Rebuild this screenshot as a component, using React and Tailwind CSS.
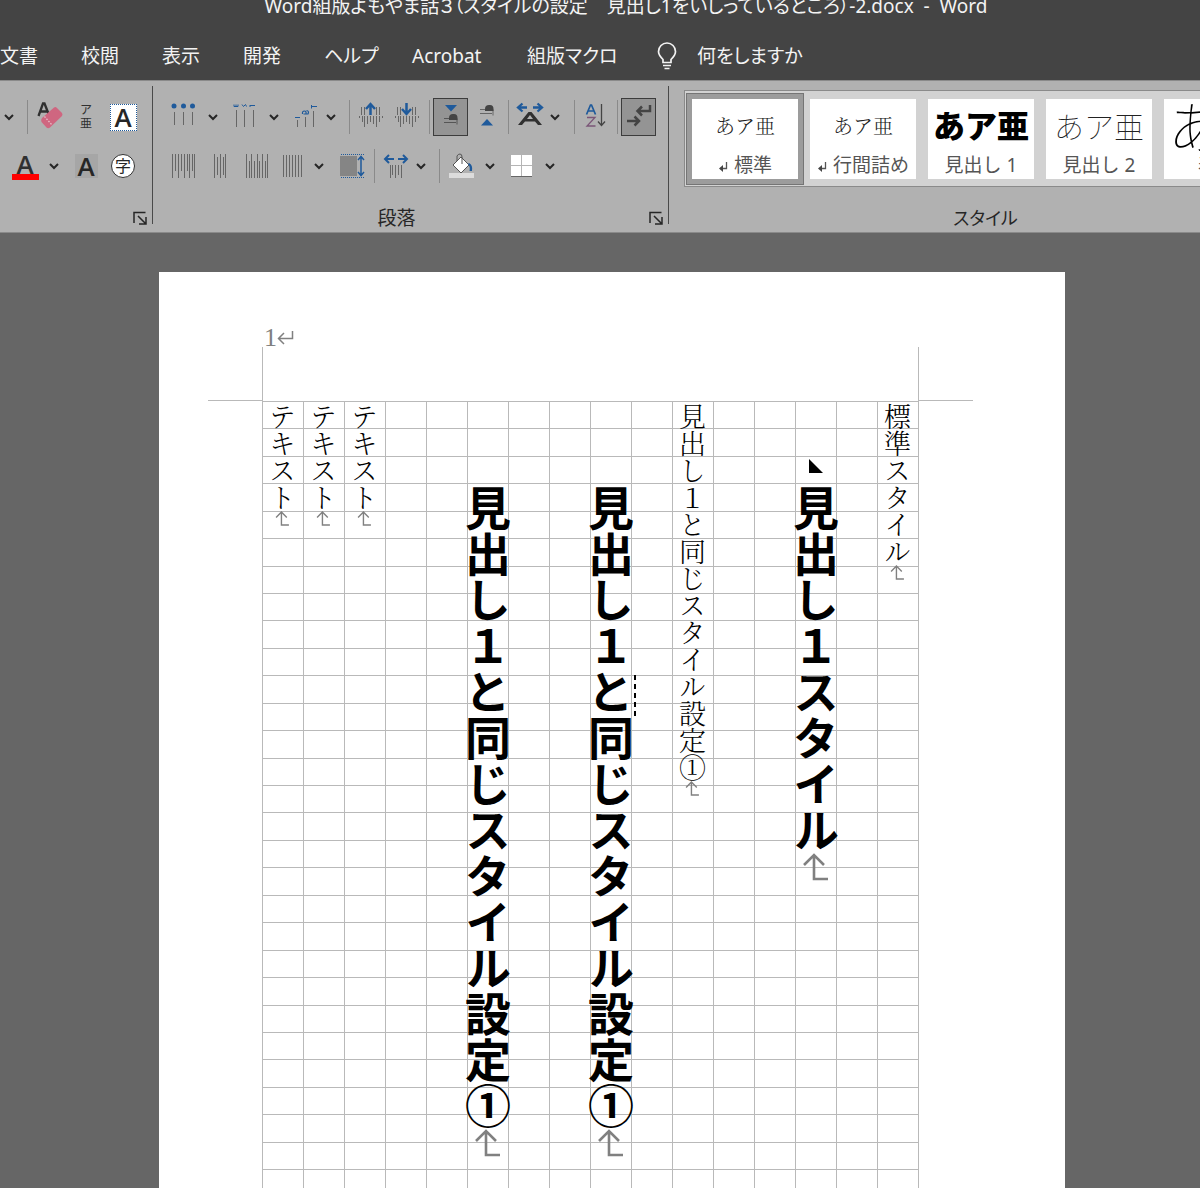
import React, { useState } from 'react';

const BLUE = '#1f5a9b';

const Icon = ({ children }) => (
  <svg viewBox="0 0 32 38" className="w-8 h-[38px] shrink-0" fill="none" aria-hidden="true">
    {children}
  </svg>
);

const Tool = ({ label, className = '', children }) => (
  <button type="button" aria-label={label} className={`h-[38px] w-8 shrink-0 flex items-center justify-center ${className}`}>
    {children}
  </button>
);

const Toggle = ({ label, className = '', children }) => {
  const [on, setOn] = useState(true);
  return (
    <button
      type="button"
      aria-label={label}
      aria-pressed={on}
      onClick={() => setOn(!on)}
      className={`h-[38px] w-[35px] shrink-0 flex items-center justify-center border-[#3c3c3c] ${on ? 'border bg-[#949494]' : ''} ${className}`}
    >
      {children}
    </button>
  );
};

const More = ({ label, className = '' }) => (
  <button type="button" aria-label={label} className={`h-[38px] w-[14px] shrink-0 flex items-center justify-center ${className}`}>
    <svg viewBox="0 0 14 14" className="w-[14px] h-[14px]" fill="none" stroke="#262626" strokeWidth="2" aria-hidden="true">
      <path d="M3 5l4 4 4-4" />
    </svg>
  </button>
);

const Sep = ({ className = '' }) => <div className={`w-px h-[34px] shrink-0 bg-[#8a8a8a] ${className}`} />;

const Launcher = ({ label }) => (
  <button type="button" aria-label={label} className="w-6 h-5 shrink-0 flex items-center justify-center">
    <svg viewBox="0 0 14 14" className="w-[14px] h-[14px]" fill="none" stroke="#262626" strokeWidth="1.5" aria-hidden="true">
      <path d="M1 12V1.500h11.500M5 5l7.500 7.500M13 6v7H6" />
    </svg>
  </button>
);

// vertical strokes given as [x, y1, y2]
const Lines = ({ list, color = '#666' }) => (
  <path d={list.map(([x, a, b]) => `M${x} ${a}V${b}`).join('')} stroke={color} strokeWidth="1" />
);

const INDENT_LINES = [
  [6.5, 9, 17], [9.5, 9, 17], [21.5, 9, 17], [24.5, 9, 17],
  [4.5, 18, 20], [7.5, 18, 24], [9.5, 18, 29], [12.5, 18, 26], [15.5, 18, 24],
  [18.5, 18, 26], [21.5, 18, 29], [24.5, 18, 24], [27.5, 18, 20],
];

const FontGroup = () => (
  <div className="w-[152px] shrink-0 flex flex-col">
    <div className="flex items-center">
      <More label="フォント" className="ml-[2px]" />
      <Sep className="ml-[11px]" />
      <Tool label="書式のクリア" className="ml-[6px]">
        <Icon>
          <path d="M4.500 18L9 5.500h1.500L15 17M6.500 13.500h7" stroke="#303030" strokeWidth="2.300" />
          <path d="M8 20L20 9.500Q21.500 8.500 23 10l5 5q1 1.500 0 3L16 29.500q-2 1.500-3.500 0L7.500 24q-1-2 .500-4z" fill="#cf6680" />
          <path d="M10.500 18.500l7.500 8.500" stroke="#e8c0ca" strokeWidth="1.300" strokeDasharray="1.500 1.500" />
        </Icon>
      </Tool>
      <Tool label="ルビ" className="ml-[4px]">
        <span className="flex flex-col items-center text-[12px] leading-[14px] text-[#303030]">
          <span>ア</span>
          <span>亜</span>
        </span>
      </Tool>
      <Tool label="囲み線" className="ml-[5px]">
        <span className="w-[27px] h-[27px] bg-white border border-dotted border-[#1f5a9b] text-center text-[26px] leading-[25px] font-semibold text-[#262626] font-['Open_Sans',sans-serif]">
          A
        </span>
      </Tool>
    </div>
    <div className="flex items-center mt-[11px]">
      <Tool label="フォントの色" className="ml-[9px]">
        <span className="w-[27px] h-[28px] flex flex-col items-center border-b-[6px] border-[#ff0000] text-[26px] leading-[24px] font-semibold text-[#303030] font-['Open_Sans',sans-serif]">
          A
        </span>
      </Tool>
      <More label="フォントの色の選択" className="ml-[6px]" />
      <Tool label="文字の網かけ" className="ml-[9px]">
        <span className="w-[23px] h-6 bg-[#a6a6a6] text-center text-[26px] leading-6 font-semibold text-[#262626] font-['Open_Sans',sans-serif]">A</span>
      </Tool>
      <Tool label="囲い文字" className="ml-[5px]">
        <span className="w-6 h-6 rounded-full bg-white border border-[#333] text-center text-[16px] leading-[22px] text-[#262626]">字</span>
      </Tool>
    </div>
    <div className="flex justify-end mt-[23px]">
      <Launcher label="フォントの設定" />
    </div>
  </div>
);

const ParagraphGroup = () => (
  <div className="w-[516px] shrink-0 flex flex-col border-l border-[#4a4a4a] -mt-3 pt-3 h-[138px]">
    <div className="flex items-center pl-[15px]">
      <Tool label="箇条書き">
        <Icon>
          <circle cx="6" cy="8" r="2.500" fill={BLUE} />
          <circle cx="15.500" cy="8" r="2.500" fill={BLUE} />
          <circle cx="24.500" cy="8" r="2.500" fill={BLUE} />
          <Lines list={[[6.5, 14, 27], [15.5, 14, 27], [24.5, 14, 27]]} />
        </Icon>
      </Tool>
      <More label="行頭文字" className="ml-[6px]" />
      <Tool label="段落番号" className="ml-[9px]">
        <Icon>
          <path d="M5 6.500v2h4v-2M7 6.500v2M13 6.500l1.500 2 2-2 1 2M21 7.500h5M21 9V7" stroke={BLUE} />
          <Lines list={[[7.5, 12, 29], [15.5, 12, 29], [24.5, 12, 29]]} />
        </Icon>
      </Tool>
      <More label="番号の種類" className="ml-[6px]" />
      <Tool label="アウトライン" className="ml-[9px]">
        <Icon>
          <path d="M5 19.500h5M21 8.500h6M21.500 10.500V7" stroke={BLUE} />
          <path d="M12.500 16q-.500-3 2-3 2 0 1.500 3h-2.500M16 16h2q1.500-3-1.500-3.500" stroke={BLUE} strokeWidth="1.200" />
          <Lines list={[[7.5, 22, 29], [15.5, 19, 29], [23.5, 13, 29]]} />
        </Icon>
      </Tool>
      <More label="リストの種類" className="ml-[2px]" />
      <Sep className="ml-[11px]" />
      <Tool label="インデントを減らす" className="ml-[5px]">
        <Icon>
          <Lines list={INDENT_LINES} />
          <path d="M15.500 17V7M11 11l4.500-5 4.500 5" stroke={BLUE} strokeWidth="2.500" />
        </Icon>
      </Tool>
      <Tool label="インデントを増やす" className="ml-1">
        <Icon>
          <Lines list={INDENT_LINES} />
          <path d="M15.500 5v10M11 11l4.500 5 4.500-5" stroke={BLUE} strokeWidth="2.500" />
        </Icon>
      </Tool>
      <Sep className="ml-[6px]" />
      <Toggle label="上揃え" className="ml-[3px]">
        <Icon>
          <path d="M10 7h12l-6 6.500z" fill={BLUE} />
          <path d="M9 20.500h13v6M9 24.500h12" stroke="#555" />
          <path d="M14 20q0-4 4-4h1q3.500 0 3.500 4v2H14z" fill="#444" />
        </Icon>
      </Toggle>
      <Tool label="下揃え" className="ml-[3px]">
        <Icon>
          <path d="M10 27.500h12l-6-6.500z" fill={BLUE} />
          <path d="M9 11.500h13v6M9 15.500h12" stroke="#666" />
          <path d="M14 11q0-4 4-4h1q3.500 0 3.500 4v2H14z" fill="#444" />
        </Icon>
      </Tool>
      <Sep className="ml-[5px]" />
      <Tool label="拡張書式" className="ml-[5px]">
        <Icon>
          <path d="M13 9.500H5M8.500 5.500L4 9.500l4.500 4M19 9.500h8M23.500 5.500l4.500 4-4.500 4" stroke={BLUE} strokeWidth="2.300" />
          <path d="M4 27L14.500 14h3L28 27h-4l-3-3.500H11L8 27zM13 21h6l-3-4z" fill="#303030" fillRule="evenodd" />
        </Icon>
      </Tool>
      <More label="拡張書式の選択" className="ml-[2px]" />
      <Sep className="ml-3" />
      <Tool label="並べ替え" className="ml-1">
        <Icon>
          <path d="M7.500 16.500L11.500 7h1l4 9.500M9 13h6" stroke={BLUE} strokeWidth="1.700" />
          <path d="M8 19.500h8L8 28h8.500" stroke="#7a5577" strokeWidth="1.300" />
          <path d="M22.500 6v21M19 23.500l3.500 4 3.500-4" stroke="#444" strokeWidth="1.300" />
        </Icon>
      </Tool>
      <Sep className="ml-[6px]" />
      <Toggle label="編集記号の表示" className="ml-[3px]">
        <Icon>
          <path d="M27 7v6H15.500M19 8.500L14.500 13l4.500 4.500" stroke="#444" strokeWidth="2.500" />
          <path d="M4 23h11M11.500 18.500l4.500 4.500-4.500 4.500" stroke="#444" strokeWidth="2.500" />
        </Icon>
      </Toggle>
    </div>
    <div className="flex items-center pl-[15px] mt-[11px]">
      <Tool label="上に揃える">
        <Icon>
          <Lines list={[[4.5, 7, 31], [7.5, 7, 24], [10.5, 7, 31], [13.5, 7, 24], [16.5, 7, 31], [19.5, 7, 24], [21.5, 7, 31], [24.5, 7, 24], [26.5, 7, 31]]} />
        </Icon>
      </Tool>
      <Tool label="中央に揃える" className="ml-1">
        <Icon>
          <Lines list={[[10.5, 7, 31], [13.5, 10, 28], [16.5, 7, 31], [19.5, 10, 28], [21.5, 7, 31]]} />
        </Icon>
      </Tool>
      <Tool label="下に揃える" className="ml-[5px]">
        <Icon>
          <Lines list={[[5.5, 7, 31], [8.5, 14, 31], [10.5, 7, 31], [13.5, 14, 31], [16.5, 7, 31], [18.5, 14, 31], [21.5, 7, 31], [24.5, 14, 31], [26.5, 7, 31]]} />
        </Icon>
      </Tool>
      <Tool label="両端揃え" className="ml-1">
        <Icon>
          <Lines list={[[6.5, 8, 30], [9.5, 8, 30], [12.5, 8, 30], [15.5, 8, 30], [18.5, 8, 30], [21.5, 8, 30], [24.5, 8, 30]]} />
        </Icon>
      </Tool>
      <More label="配置の種類" className="ml-[3px]" />
      <Tool label="均等割り付け" className="ml-[10px]">
        <Icon>
          <path d="M4 9h17v20H4z" fill="#858585" />
          <path d="M5 7.500h23M5 30.500h23" stroke={BLUE} strokeDasharray="1 1" />
          <path d="M25 10v18M22 13l3-3.500 3 3.500M22 25l3 3.500 3-3.500" stroke={BLUE} strokeWidth="1.500" />
        </Icon>
      </Tool>
      <Sep className="ml-[6px]" />
      <Tool label="行と段落の間隔" className="ml-[5px]">
        <Icon>
          <path d="M14 12H6M9 8l-4 4 4 4M18 12h8M23 8l4 4-4 4" stroke={BLUE} strokeWidth="2" />
          <Lines list={[[10.5, 18, 31], [12.5, 18, 28], [15.5, 18, 31], [18.5, 18, 28], [21.5, 18, 31]]} />
        </Icon>
      </Tool>
      <More label="間隔の選択" className="ml-[2px]" />
      <Sep className="ml-[11px]" />
      <Tool label="塗りつぶし" className="ml-[5px]">
        <Icon>
          <path d="M8 18l8-8 8 8-8 8z" fill="#fff" stroke="#555" />
          <path d="M12 14V9q1-2 3-2t2 3v7" stroke="#555" />
          <path d="M24 16q4 2 3 8h-2.500q1-4-1.500-7z" fill={BLUE} />
          <path d="M4 26h25v5H4z" fill="#dcdcdc" />
        </Icon>
      </Tool>
      <More label="塗りつぶしの色" className="ml-[6px]" />
      <Tool label="罫線" className="ml-2">
        <Icon>
          <path d="M6 8h21v21H6z" fill="#fff" />
          <path d="M16.500 8v21M6 18.500h21" stroke="#b5b5b5" />
          <path d="M6 29.500h21" stroke="#666" />
        </Icon>
      </Tool>
      <More label="罫線の種類" className="ml-[6px]" />
    </div>
    <div className="flex mt-[23px]">
      <div className="flex-1 pr-1 text-center text-[19px] leading-5 text-[#262626]">段落</div>
      <Launcher label="段落の設定" />
    </div>
  </div>
);

const STYLES = [
  { name: '標準', mark: true, sample: "justify-center text-[20px] font-light font-['Noto_Serif_CJK_JP','Noto_Sans_CJK_JP',serif]" },
  { name: '行間詰め', mark: true, sample: "justify-center text-[20px] font-light font-['Noto_Serif_CJK_JP','Noto_Sans_CJK_JP',serif]" },
  { name: '見出し 1', sample: 'justify-center text-[32px] font-black text-black' },
  { name: '見出し 2', sample: 'justify-center text-[30px] font-thin' },
  { name: '表題', sample: 'justify-start pl-1 text-[56px] leading-[54px] font-thin text-black' },
];

const StylesGroup = () => {
  const [selected, setSelected] = useState('標準');

  return (
    <div className="flex-1 min-w-0 overflow-x-clip flex flex-col border-l border-[#4a4a4a] -mt-3 pt-1 h-[138px]">
      <div className="ml-[15px] h-[97px] shrink-0 flex border border-r-0 border-[#8a8a8a] bg-[#d2d2d2] pt-[2px] pl-px">
        {STYLES.map(s => (
          <button
            key={s.name}
            type="button"
            onClick={() => setSelected(s.name)}
            className={`w-[118px] h-[92px] shrink-0 border p-[5px] ${
              selected === s.name ? 'border-[#757575] bg-[#9c9c9c]' : 'border-transparent'
            }`}
          >
            <span className="h-full bg-white flex flex-col items-center overflow-hidden whitespace-nowrap">
              <span className={`w-full h-[54px] shrink-0 flex items-center text-[#222] ${s.sample}`}>あア亜</span>
              <span className="flex items-center gap-[6px] text-[19px] leading-6 text-[#555]">
                {s.mark && (
                  <svg viewBox="0 0 10 12" className="w-[10px] h-3 mt-1" fill="none" aria-hidden="true">
                    <path d="M8.500 1v6.500H4" stroke="#555" strokeWidth="1.300" />
                    <path d="M5 4L1 7.500 5 11z" fill="#444" />
                  </svg>
                )}
                {s.name}
              </span>
            </span>
          </button>
        ))}
      </div>
      <div className="pl-[102px] mt-[19px] text-center text-[18px] leading-6 text-[#262626] [font-feature-settings:'palt']">スタイル</div>
    </div>
  );
};

const TABS = [
  { name: '文書', width: 'w-[81px]' },
  { name: '校閲', width: 'w-[81px]' },
  { name: '表示', width: 'w-[81px]' },
  { name: '開発', width: 'w-[81px]' },
  { name: 'ヘルプ', width: 'w-[88px]' },
  { name: 'Acrobat', width: 'w-[115px]' },
  { name: '組版マクロ', width: 'w-[130px]' },
];

const ReturnMark = ({ big }) => (
  <svg
    viewBox="0 0 14 14"
    className={big ? 'w-[28px] h-[28px] shrink-0' : 'w-[15px] h-[15px] shrink-0'}
    fill="none"
    stroke="#808080"
    strokeWidth="1.300"
    aria-hidden="true"
  >
    <path d="M6 1v12h7M1 6l5-5 5 5" />
  </svg>
);

// one vertical line of manuscript, placed on the grid by its column number
const BODY = "text-[27px] leading-[41px] font-light pt-[2px] font-['Noto_Serif_CJK_JP','Noto_Sans_CJK_JP',serif]";
const HEADING = "text-[46px] leading-[41px] font-bold pt-[84px] font-['Noto_Sans_CJK_JP',sans-serif]";

const COLUMNS = [
  { place: 'col-start-1', text: 'テキスト' },
  { place: 'col-start-2', text: 'テキスト' },
  { place: 'col-start-3', text: 'テキスト' },
  { place: 'col-start-6', text: '見出し１と同じスタイル設定①', heading: true },
  { place: 'col-start-9', text: '見出し１と同じスタイル設定①', heading: true, caret: true },
  { place: 'col-start-11', text: '見出し１と同じスタイル設定①' },
  { place: 'col-start-14', text: '見出し１スタイル', heading: true, collapse: true },
  { place: 'col-start-16', text: '標準スタイル' },
];

const Column = ({ place, text, heading, caret, collapse }) => {
  const Tag = heading ? 'h2' : 'p';
  return (
    <div className={`relative row-start-1 flex flex-col items-center ${place}`}>
      {collapse && (
        <svg viewBox="0 0 14 14" className="absolute top-[58px] left-[14px] w-[14px] h-[14px]" aria-hidden="true">
          <path d="M0 0v14h14z" fill="#000" />
        </svg>
      )}
      <Tag className={`whitespace-nowrap text-black [writing-mode:vertical-rl] [text-orientation:upright] ${heading ? HEADING : BODY}`}>
        {text}
      </Tag>
      <ReturnMark big={heading} />
      {caret && (
        <svg viewBox="0 0 2 42" className="absolute top-[274px] left-[44px] w-[2px] h-[42px]" aria-hidden="true">
          <path d="M1 0v42" stroke="#000" strokeWidth="2" strokeDasharray="5 4" />
        </svg>
      )}
    </div>
  );
};

const Page = () => (
  <div className="w-full max-w-[906px] mx-auto bg-white">
    <div className="h-[75px] pl-[105px] pt-[57px] flex items-center text-[26px] leading-6 text-[#808080] font-['Liberation_Serif',serif]">
      1
      <svg viewBox="0 0 17 15" className="w-[17px] h-[15px]" fill="none" stroke="#808080" strokeWidth="1.500" aria-hidden="true">
        <path d="M15.500 0v7.500H1.500M7 2L1.500 7.500 7 13" />
      </svg>
    </div>
    <div className="h-[54px] pl-[49px] pr-[92px] flex justify-between">
      <div className="w-[55px] border-b border-r border-[#b9b9b9]" />
      <div className="w-[55px] border-b border-l border-[#b9b9b9]" />
    </div>
    <div className="ml-[103px] mr-[147px] relative">
      <div className="absolute inset-0 grid grid-rows-[repeat(30,1fr)]">
        {Array.from({ length: 30 }, (_, i) => (
          <div key={i} className="border-t border-[#b9b9b9]" />
        ))}
      </div>
      <div className="absolute inset-y-0 left-0 -right-px border-r border-[#b9b9b9]" />
      <div className="absolute inset-0 grid grid-cols-16">
        {Array.from({ length: 16 }, (_, i) => (
          <div key={i} className="border-l border-[#b9b9b9]" />
        ))}
      </div>
      <div className="relative h-[823px] grid grid-cols-16">
        {COLUMNS.map(col => (
          <Column key={col.place} {...col} />
        ))}
      </div>
    </div>
  </div>
);

const App = () => {
  return (
    <div className="h-screen flex flex-col overflow-hidden bg-[#666] font-['Noto_Sans','Noto_Sans_CJK_JP',sans-serif]">
      <header className="h-20 shrink-0 bg-[#444] text-[#f3f3f3] text-[19px] overflow-hidden">
        <div className="h-8 pl-[52px] overflow-hidden">
          <h1 className="-mt-1 text-center leading-5 whitespace-pre [font-feature-settings:'palt']">
            Word組版よもやま話３（スタイルの設定　見出し1をいしっているところ）-2.docx  -  Word
          </h1>
        </div>
        <nav className="h-12 flex items-center whitespace-nowrap [font-feature-settings:'palt']">
          {TABS.map(tab => (
            <button key={tab.name} type="button" className={`shrink-0 text-left ${tab.width}`}>
              {tab.name}
            </button>
          ))}
          <button type="button" className="flex items-center gap-5">
            <svg viewBox="0 0 20 28" className="w-5 h-7" fill="none" stroke="#f3f3f3" strokeWidth="1.700" aria-hidden="true">
              <path d="M6 20.500v-3Q1.500 13 1.500 9.500a8.500 8.500 0 0 1 17 0Q18.500 13 14 17.500v3zM6 23.500h8M7.500 26.500h5" />
            </svg>
            何をしますか
          </button>
        </nav>
      </header>

      <div className="h-[153px] shrink-0 flex bg-[#b1b1b1] border-t border-b border-t-[#8a8a8a] border-b-[#8a8a8a] pt-[17px]">
        <FontGroup />
        <ParagraphGroup />
        <StylesGroup />
      </div>

      <main className="flex-1 min-h-0 overflow-hidden pl-6 pt-[39px]">
        <Page />
      </main>
    </div>
  );
};

export default App;
